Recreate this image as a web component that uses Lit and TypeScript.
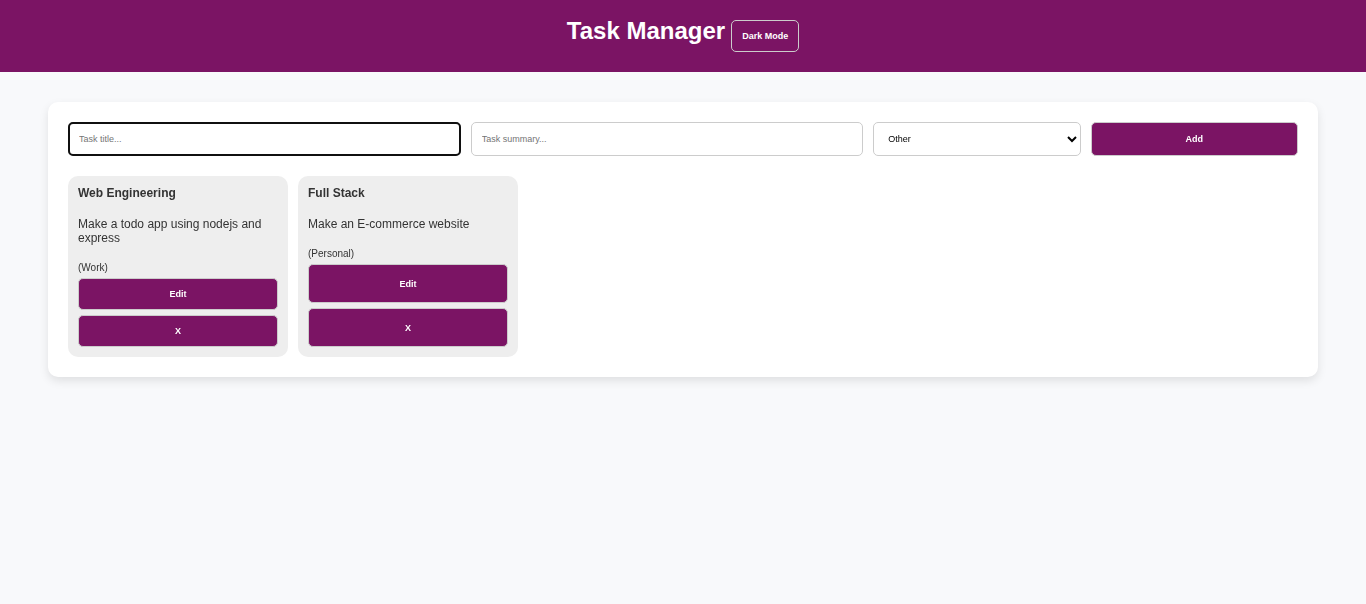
import { LitElement, html, css } from "lit";
import { customElement, query, state } from "lit/decorators.js";

interface Task {
  title: string;
  summary: string;
  category: string;
}

@customElement("app-root")
export class AppRoot extends LitElement {
  static styles = css`
    :host {
      display: block;
      min-height: 100vh;
      background: #f8f9fb;
      color: #333;
      font-family: "Liberation Sans", Arial, sans-serif;
      font-size: 12px;
      line-height: 14px;
    }
    * {
      box-sizing: border-box;
    }
    header {
      display: flex;
      justify-content: center;
      align-items: baseline;
      gap: 6px;
      padding: 17px 20px 20px;
      background: #7b1464;
      color: #fff;
    }
    h1 {
      margin: 0;
      font-size: 24px;
      line-height: 28px;
    }
    main {
      margin: 30px 48px;
      padding: 20px;
      background: #fff;
      border-radius: 10px;
      box-shadow: 0 4px 10px rgba(0, 0, 0, 0.1);
    }
    input,
    select,
    button {
      min-width: 0;
      margin: 0;
      padding: 10px;
      border: 1px solid #ccc;
      border-radius: 5px;
      font-family: inherit;
      font-size: 9px;
      line-height: 10px;
    }
    input,
    select {
      background: #fff;
      color: #000;
    }
    input::placeholder {
      color: #757575;
    }
    input:focus {
      outline: 2px solid #101010;
      outline-offset: -2px;
    }
    button {
      background: #7b1464;
      color: #fff;
      font-weight: bold;
      cursor: pointer;
    }
    form {
      display: flex;
      gap: 10px;
      margin-bottom: 20px;
    }
    form > * {
      height: 34px;
      flex: 1 1 0;
    }
    form > input {
      flex-grow: 2;
    }
    .tasks {
      display: flex;
      flex-wrap: wrap;
      gap: 10px;
      margin: 0;
      padding: 0;
      list-style: none;
    }
    .task {
      display: flex;
      flex-direction: column;
      width: 220px;
      padding: 10px;
      background: #eee;
      border-radius: 10px;
    }
    h2 {
      margin: 0 0 17px;
      font-size: 12px;
      line-height: 14px;
    }
    p {
      margin: 0 0 17px;
    }
    small {
      margin-bottom: 4px;
      font-size: 10px;
      line-height: 12px;
    }
    .actions {
      flex: 1;
      display: grid;
      grid-auto-rows: 1fr;
      gap: 5px;
    }
  `;

  @query("#title") titleInput!: HTMLInputElement;

  @state() tasks: Task[] = [
    { title: "Web Engineering", summary: "Make a todo app using nodejs and express", category: "Work" },
    { title: "Full Stack", summary: "Make an E-commerce website", category: "Personal" },
  ];

  firstUpdated() {
    this.titleInput.focus();
  }

  private add(event: Event) {
    event.preventDefault();
    const form = event.target as HTMLFormElement;
    const data = new FormData(form);
    const title = String(data.get("title")).trim();
    if (!title) return;
    this.tasks = [
      ...this.tasks,
      { title, summary: String(data.get("summary")), category: String(data.get("category")) },
    ];
    form.reset();
  }

  private remove(task: Task) {
    this.tasks = this.tasks.filter((t) => t !== task);
  }

  render() {
    return html`
      <header>
        <h1>Task Manager</h1>
        <button type="button">Dark Mode</button>
      </header>
      <main>
        <form @submit=${this.add}>
          <input id="title" name="title" aria-label="Task title" placeholder="Task title..." autocomplete="off" />
          <input name="summary" aria-label="Task summary" placeholder="Task summary..." autocomplete="off" />
          <select name="category" aria-label="Category">
            <option>Other</option>
            <option>Work</option>
            <option>Personal</option>
          </select>
          <button type="submit">Add</button>
        </form>
        <ul class="tasks">
          ${this.tasks.map(
            (task) => html`
              <li class="task">
                <h2>${task.title}</h2>
                <p>${task.summary}</p>
                <small>(${task.category})</small>
                <div class="actions">
                  <button type="button">Edit</button>
                  <button type="button" @click=${() => this.remove(task)}>X</button>
                </div>
              </li>
            `
          )}
        </ul>
      </main>
    `;
  }
}
